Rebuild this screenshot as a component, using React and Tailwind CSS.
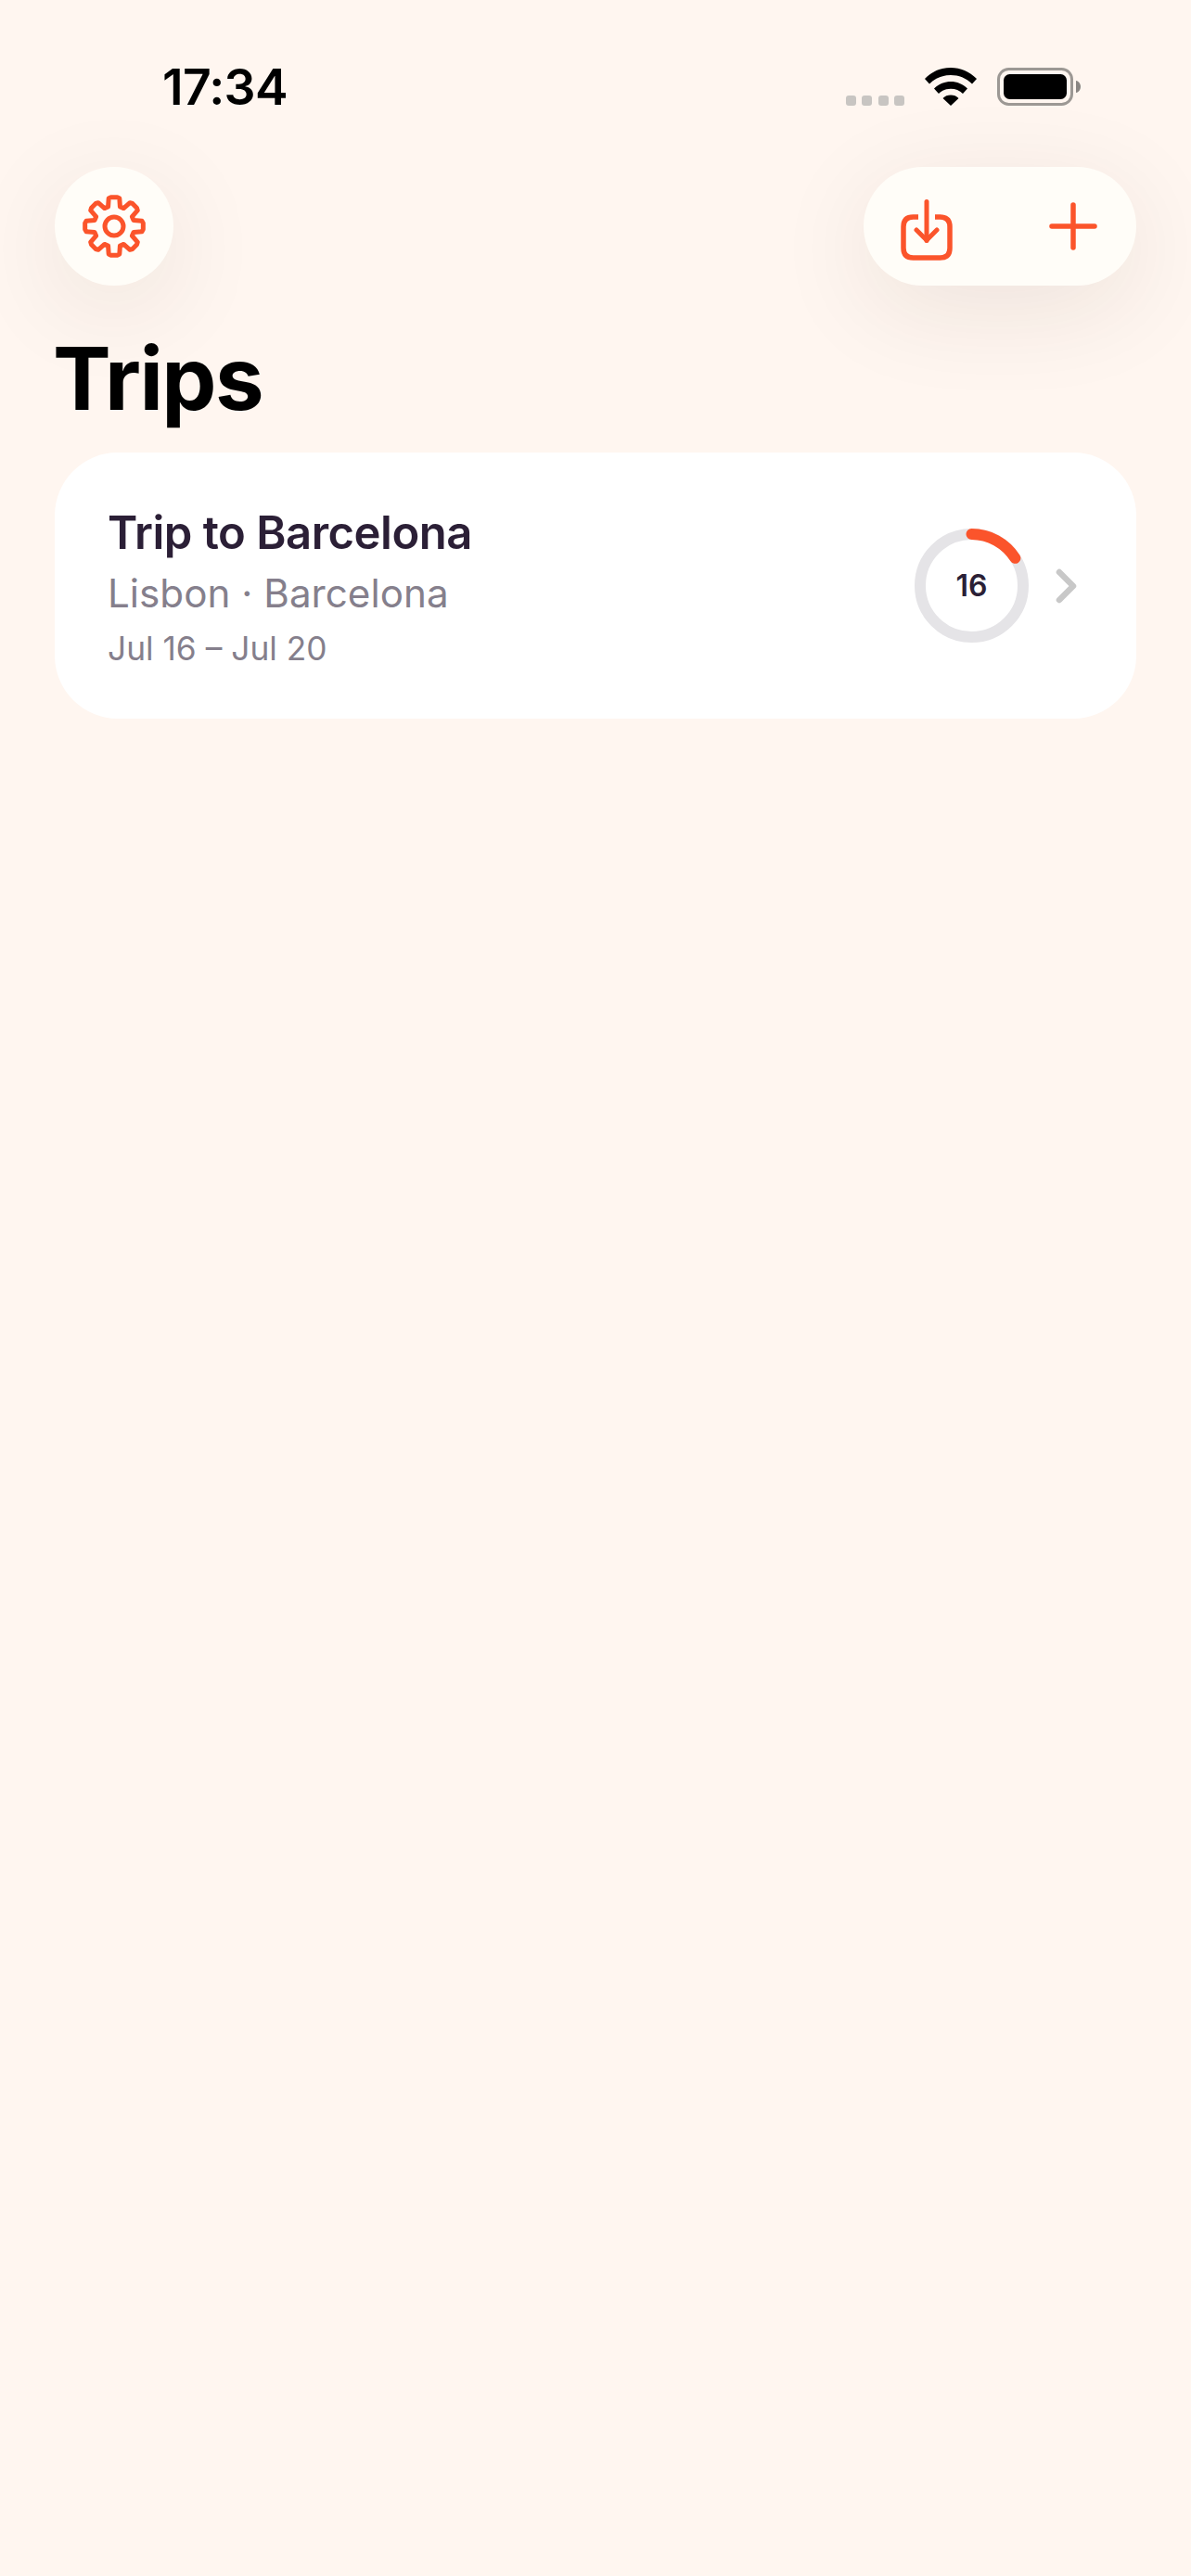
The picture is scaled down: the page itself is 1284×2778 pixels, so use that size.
import React from 'react';

const ORANGE = '#fb542b';

const StatusBar = () => (
  <div className="flex h-[180px] items-start pl-[175px] pr-[118px] pt-[64px]">
    <span className="text-[53.5px] font-semibold leading-[60px] tracking-[-0.7px] text-black">17:34</span>
    <div className="ml-auto flex items-start pt-[9px]">
      {/* signal dots */}
      <div className="mt-[30px] flex gap-[6.5px]">
        {[0, 1, 2, 3].map((i) => (
          <div key={i} className="h-[11px] w-[11px] rounded-[3px] bg-[#c8c5c2]" />
        ))}
      </div>
      <svg className="ml-[22px]" width="56" height="41" viewBox="0 0 56 41">
        <path d="M28 0C17.5 0 8 4 0 12l5 5.5C11.500 11 19.500 8 28 8s16.500 3 23 9.500L56 12C48 4 38.500 0 28 0Z" fill="#000" />
        <path d="M28 15c-6.800 0-13 2.600-18 7.500l5 5.500c3.400-3.400 8-5.300 13-5.300s9.600 1.900 13 5.300l5-5.500C41 17.600 34.800 15 28 15Z" fill="#000" />
        <path d="M28 29.500c-3.300 0-6.300 1.200-8.500 3.400L28 41l8.500-8.100c-2.200-2.200-5.200-3.400-8.500-3.400Z" fill="#000" />
      </svg>
      <svg className="ml-[22px]" width="91" height="41" viewBox="0 0 91 41">
        <rect x="1.500" y="1.500" width="79" height="38" rx="11" fill="none" stroke="#9c9894" strokeWidth="3" />
        <rect x="7" y="7" width="68" height="27" rx="6.500" fill="#000" />
        <path d="M85 14c3 .6 5 3.300 5 6.500s-2 5.900-5 6.500Z" fill="#8a8683" />
      </svg>
    </div>
  </div>
);

// eight teeth, one tooth straight up
const gearPath = () => {
  const point = (r, deg) => {
    const a = ((deg - 90) * Math.PI) / 180;
    return `${(34 + r * Math.cos(a)).toFixed(2)} ${(34 + r * Math.sin(a)).toFixed(2)}`;
  };
  let d = '';
  for (let i = 0; i < 8; i++) {
    const c = i * 45;
    d += `${i === 0 ? 'M' : 'L'}${point(22, c - 17)} `;
    d += `L${point(30.5, c - 11)} L${point(31.5, c - 6)} L${point(31.5, c + 6)} L${point(30.5, c + 11)} L${point(22, c + 17)} `;
  }
  return d + 'Z';
};

const GearIcon = () => (
  <svg width="68" height="68" viewBox="0 0 68 68" fill="none" stroke={ORANGE} strokeWidth="5" strokeLinejoin="round">
    <path d={gearPath()} />
    <circle cx="34" cy="34" r="10" />
  </svg>
);

const ImportIcon = () => (
  <svg className="mt-[8px]" width="56" height="66" viewBox="0 0 56 66" fill="none" stroke={ORANGE} strokeLinecap="round" strokeLinejoin="round">
    <path strokeWidth="5.500" strokeLinecap="butt" d="M19 19H13.500C6.500 19 3 22.500 3 29.500v23C3 59.500 6.500 63 13.500 63h29C49.500 63 53 59.500 53 52.500v-23C53 22.500 49.500 19 42.500 19H37" />
    <path strokeWidth="5" d="M28 2.500v42" />
    <path strokeWidth="5" d="M17 33l11 11 11-11" />
  </svg>
);

const PlusIcon = () => (
  <svg width="52" height="52" viewBox="0 0 52 52" fill="none" stroke={ORANGE} strokeWidth="5.500" strokeLinecap="round">
    <path d="M26 3v46" />
    <path d="M3 26h46" />
  </svg>
);

const ProgressRing = ({ value }) => {
  const radius = 55.5;
  const circumference = 2 * Math.PI * radius;
  return (
    <div className="relative h-[123px] w-[123px]">
      <svg width="123" height="123" viewBox="0 0 123 123" className="-rotate-90">
        <circle cx="61.500" cy="61.500" r={radius} fill="none" stroke="#e5e4e7" strokeWidth="12" />
        <circle
          cx="61.500"
          cy="61.500"
          r={radius}
          fill="none"
          stroke={ORANGE}
          strokeWidth="12"
          strokeLinecap="round"
          strokeDasharray={`${(circumference * value) / 100} ${circumference}`}
        />
      </svg>
      <div className="absolute inset-0 flex items-center justify-center text-[32px] font-semibold text-[#2b1f36]">
        {value}
      </div>
    </div>
  );
};

const TripCard = () => (
  <div className="flex h-[287px] items-center rounded-[68px] bg-white pl-[57px] pr-[63px]">
    <div className="flex flex-col pt-[5px]">
      <span className="text-[49px] font-semibold leading-[60px] tracking-[-0.5px] text-[#2b1f36]">Trip to Barcelona</span>
      <span className="mt-[7px] text-[42.2px] leading-[56px] text-[#857f8c]">Lisbon · Barcelona</span>
      <span className="mt-[8px] text-[35.3px] leading-[48px] text-[#857f8c]">Jul 16 – Jul 20</span>
    </div>
    <div className="ml-auto flex items-center gap-[29px]">
      <ProgressRing value={16} />
      <svg width="24" height="38" viewBox="0 0 24 38" fill="none" stroke="#c8c8c8" strokeWidth="6.500" strokeLinecap="round" strokeLinejoin="round">
        <path d="M4 4l15 15L4 34" />
      </svg>
    </div>
  </div>
);

export default function App() {
  return (
    <div className="min-h-[2778px] bg-[#fff6f0] font-['Inter',sans-serif]">
      <StatusBar />
      <div className="px-[59px]">
        {/* toolbar */}
        <div className="flex items-center justify-between">
          <button className="flex h-[128px] w-[128px] items-center justify-center rounded-full bg-[#fffdf8] shadow-[0_24px_110px_rgba(60,30,20,0.09)]">
            <GearIcon />
          </button>
          <div className="flex h-[128px] w-[294px] items-center justify-between rounded-full bg-[#fffdf8] pl-[40px] pr-[42px] shadow-[0_24px_110px_rgba(60,30,20,0.09)]">
            <ImportIcon />
            <PlusIcon />
          </div>
        </div>
        <h1 className="-ml-[2px] mt-[44px] text-[94px] font-bold leading-[112px] tracking-[-1.5px] text-black">Trips</h1>
        <div className="mt-[24px]">
          <TripCard />
        </div>
      </div>
    </div>
  );
}
